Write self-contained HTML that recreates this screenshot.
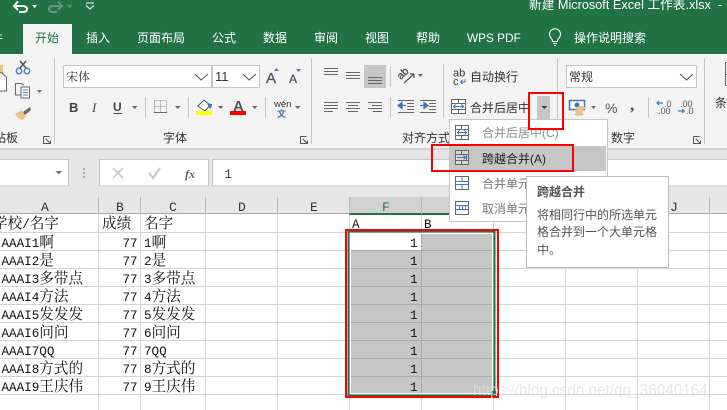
<!DOCTYPE html>
<html><head><meta charset="utf-8"><style>
html,body{margin:0;padding:0;width:727px;height:410px;overflow:hidden;background:#fff}
svg{display:block}
text{white-space:pre}
.s{font-family:"Liberation Sans","Noto Sans CJK SC",sans-serif;font-size:12px;fill:#333}
.w{fill:#fff;font-size:12px}
.d{font-family:"Liberation Mono","Noto Serif CJK SC",serif;font-size:14.6px;fill:#111}
.l{font-family:"Liberation Mono",monospace;font-size:12.6px}
.h{font-family:"Liberation Mono",monospace;font-size:13px;fill:#333}
.g{stroke:#d4d4d4;stroke-width:1;fill:none}
.ic{stroke:#666;stroke-width:1;fill:none}
.dd{fill:#666}
.sep{stroke:#c6c6c6;stroke-width:1}
</style></head><body>
<svg width="727" height="410" viewBox="0 0 727 410" xmlns="http://www.w3.org/2000/svg" shape-rendering="crispEdges">
<!-- title bar -->
<rect width="727" height="54" fill="#217346"/>
<rect x="23" y="24" width="49" height="30" fill="#f3f3f3"/>
<g shape-rendering="auto">
<path d="M15 6 H22 Q27 6 27 9 Q27 12 22 12 H19 M18 1.500 L14 6 L18 10" stroke="#fff" stroke-width="2" fill="none"/>
<path d="M32 5 h5 l-2.500 3z" fill="#fff"/>
<path d="M61 6 H54 Q49 6 49 9 Q49 12 54 12 H57 M58 1.500 L62 6 L58 10" stroke="#5f9a7b" stroke-width="2" fill="none"/>
<path d="M67 5 h5 l-2.500 3z" fill="#5f9a7b"/>
<path d="M86 3 h8 M86 5.500 L90 9 L94 5.500" stroke="#fff" stroke-width="1" fill="none"/>
</g>
<text x="529" y="9" class="s w" style="font-size:12.700px">新建 Microsoft Excel 工作表.xlsx  -</text>
<text x="-9" y="42" class="s w">件</text>
<text x="35" y="42" class="s" style="fill:#217346">开始</text>
<text x="86" y="42" class="s w">插入</text>
<text x="137" y="42" class="s w">页面布局</text>
<text x="212" y="42" class="s w">公式</text>
<text x="263" y="42" class="s w">数据</text>
<text x="314" y="42" class="s w">审阅</text>
<text x="365" y="42" class="s w">视图</text>
<text x="416" y="42" class="s w">帮助</text>
<text x="467" y="42" class="s w" style="font-size:11.800px">WPS PDF</text>
<text x="574" y="42" class="s w">操作说明搜索</text>
<g shape-rendering="auto"><path d="M552.500 41.500 Q552.500 39.500 551 38 A5.500 5.500 0 1 1 559 38 Q557.500 39.500 557.500 41.500 Z M553 43.500 h4 M554 45.500 h2" stroke="#fff" stroke-width="1" fill="none"/></g>
<!-- ribbon -->
<rect y="54" width="727" height="95" fill="#f3f3f3"/>
<rect y="148" width="727" height="2" fill="#d2d2d2"/>
<rect y="150" width="727" height="47" fill="#e6e6e6"/>
<path class="sep" d="M54.500 58V144M311.500 58V144M704.500 58V144M557.500 58V144M443.500 64V118M390.500 66V87M390.500 97V118M145.500 97V118M188.500 97V118M265.500 97V118M648.500 97V118" style="stroke:#c4c4c4"/>
<!-- clipboard -->
<g shape-rendering="auto">
<rect x="0" y="65" width="3" height="8" fill="#ecc27a"/>
<path d="M-1 73 H2 L6.500 77 V91 H-1 Z" fill="#fff" stroke="#666"/>
<circle cx="19" cy="71" r="2.800" fill="none" stroke="#4a7ebb" stroke-width="1.400"/><circle cx="27" cy="71" r="2.800" fill="none" stroke="#4a7ebb" stroke-width="1.400"/>
<path d="M20 68 L26 61 M26 68 L20 61" stroke="#555" stroke-width="1.600"/>
<path d="M15.500 84 V83.500 H21 L24 85 M21 95 H15.500 V83.500" class="ic"/><rect x="21" y="87" width="8.500" height="11" fill="#fff" stroke="#666"/>
<path d="M23 90 h5 M23 92.500 h5 M23 95 h5" stroke="#4a7ebb"/>
<path class="dd" d="M37 90 h5 l-2.500 3z"/>
<path d="M15 114 L22 110 L26 117 L22 120 Q18 119 15 114Z" fill="#edc487"/><path d="M23 112 L30 107 L31 110 L25 115Z" fill="#666"/>
</g>
<text x="-6" y="142" class="s">粘板</text>
<path d="M43.500 136.500h6M43.500 136.500v7h7v-3M46 139l4 4" class="ic" style="stroke:#555"/>
<!-- font group -->
<rect x="63.500" y="65.500" width="148" height="22" fill="#fff" stroke="#c6c6c6"/>
<rect x="212.500" y="65.500" width="47" height="22" fill="#fff" stroke="#c6c6c6"/>
<text x="66" y="81" class="s" style="font-family:'Noto Serif CJK SC',serif">宋体</text>
<text x="215" y="81" class="s" style="font-size:13px">11</text>
<g shape-rendering="auto">
<path d="M195 74 L201 80 L208 74M243 74 L249 80 L256 74" stroke="#555" stroke-width="1.100" fill="none"/>
<text x="266" y="83" class="s" style="font-size:15px;fill:#555;stroke:#555;stroke-width:.3">A</text>
<text x="289" y="83" class="s" style="font-size:12px;fill:#555;stroke:#555;stroke-width:.3">A</text>
<path d="M274 71 h5 l-2.500 -3z" fill="#4a7ebb"/><path d="M296 69 h5 l-2.500 3z" fill="#4a7ebb"/>
<text x="69" y="112" class="s" style="font-weight:bold;font-size:13px;fill:#444;font-family:'Liberation Sans'">B</text>
<text x="92" y="112" class="s" style="font-style:italic;font-size:13px;fill:#444;font-family:'Liberation Serif'">I</text>
<text x="113" y="111" class="s" style="font-weight:bold;font-size:12px;fill:#444">U</text>
<path d="M113.500 113.500h8.500" stroke="#444"/>
<path class="dd" d="M132 106 h5.500 l-2.750 3zM175 106 h5.500 l-2.750 3zM218 106 h5.500 l-2.750 3zM252 106 h5.500 l-2.750 3zM295 106 h5.500 l-2.750 3z"/>
</g>
<path d="M154.500 100.500h12M154.500 106.500h12M154.500 100.500v12M160.500 100.500v12M166.500 100.500v12" stroke="#888" stroke-dasharray="1 1" fill="none"/><path d="M154 112.500h13" stroke="#666"/>
<g shape-rendering="auto">
<path d="M198 106 L204 100 L210 105 L205 111 Z" fill="#fff" stroke="#555"/><path d="M207 103 L212 104 Q212 107 210 109 Q208 106 207 103Z" fill="#3f77b7"/>
<text x="233" y="111" class="s" style="font-size:15px;fill:#555;font-weight:bold">A</text>
<text x="274" y="107" class="s" style="font-size:9.500px;fill:#333">wén</text>
<text x="277" y="117" class="s" style="font-size:9px;fill:#3f77b7;font-weight:bold">文</text>
</g>
<rect x="196" y="111" width="16" height="4" fill="#ff0"/>
<rect x="230" y="111" width="16" height="4" fill="#f00"/>
<text x="163" y="142" class="s">字体</text>
<path d="M300.500 136.500h6M300.500 136.500v7h7v-3M303 139l4 4" class="ic" style="stroke:#555"/>
<!-- alignment -->
<rect x="364" y="65" width="22" height="23" fill="#c6c6c6"/>
<path class="ic" d="M324 68.500h14M324 71.500h14M324 74.500h14M346 72.500h14M346 75.500h14M346 78.500h14M368 77.500h14M368 80.500h14M368 83.500h14M324 102.500h14M324 105.500h14M324 108.500h14M324 111.500h9M346 102.500h14M348 105.500h10M346 108.500h14M348 111.500h10M368 102.500h14M372 105.500h10M368 108.500h14M373 111.500h9"/>
<g shape-rendering="auto">
<text transform="translate(401 80) rotate(-45)" class="s" style="font-family:'Liberation Sans';font-size:10.500px;fill:#444;stroke:#444;stroke-width:.3">ab</text>
<path d="M404 83 L414 74 M414 74 h-4 M414 74 v4" stroke="#555" stroke-width="1.200" fill="none"/>
<path class="dd" d="M418 74 h5 l-2.500 3z"/>
<path d="M398 105.500 l4-3v6z M402 105.500h4" fill="#3f77b7" stroke="#3f77b7" stroke-width="1.200"/>
<path d="M428 105.500 l-4-3v6z M424 105.500h-4" fill="#3f77b7" stroke="#3f77b7" stroke-width="1.200"/>
</g>
<path class="ic" d="M398 100.500h16M407 103.500h7M407 106.500h7M407 109.500h7M398 112.500h16M420 100.500h16M429 103.500h7M429 106.500h7M429 109.500h7M420 112.500h16"/>
<!-- wrap and merge -->
<text x="453" y="76.500" class="s" style="font-family:'Liberation Sans';font-size:11px">ab</text>
<text x="453" y="85" class="s" style="font-family:'Liberation Sans';font-size:11px">c</text>
<path d="M465 79v3h-4m1.500-2l-2 2 2 2" stroke="#3f77b7" fill="none"/>
<text x="470" y="81" class="s">自动换行</text>
<rect x="451.500" y="99.500" width="14" height="14" fill="#fff" stroke="#666"/>
<path class="ic" d="M451.500 103.500h14M451.500 109.500h14M458.500 99.500v4M458.500 109.500v4"/>
<path d="M454 106.500h9M455.500 104.500l-2 2 2 2M461.500 104.500l2 2-2 2" stroke="#3f77b7" fill="none"/>
<text x="470" y="112" class="s">合并后居中</text>
<rect x="537" y="96" width="13" height="23" fill="#c6c6c6"/>
<path d="M541 106h6l-3 3z" fill="#444"/>
<text x="402" y="142" class="s">对齐方式</text>
<!-- number -->
<rect x="566.500" y="65.500" width="130" height="22" fill="#fff" stroke="#c6c6c6"/>
<text x="569" y="81" class="s">常规</text>
<path d="M680 74 L686.500 80 L693 74" stroke="#555" stroke-width="1.100" fill="none" shape-rendering="auto"/>
<g shape-rendering="auto">
<rect x="569.500" y="100.500" width="15" height="9" fill="#fff" stroke="#3f77b7" stroke-width="1.500"/>
<circle cx="577" cy="105" r="2.500" fill="#3f77b7"/>
<ellipse cx="581" cy="108" rx="4.500" ry="2" fill="#edc487"/><ellipse cx="579" cy="111" rx="4.500" ry="2" fill="#edc487"/><ellipse cx="579" cy="114" rx="4.500" ry="2" fill="#edc487"/>
<path class="dd" d="M591 106 h5 l-2.500 3z"/>
<text x="605" y="113" class="s" style="font-size:14px;fill:#555;font-family:'Liberation Sans'">%</text>
<text x="630" y="110" class="s" style="font-size:17px;fill:#444;font-weight:bold;font-family:'Liberation Serif'">,</text>
<text x="664" y="107" class="s" style="font-size:9px;fill:#555;font-family:'Liberation Sans'">.0</text>
<text x="658" y="114" class="s" style="font-size:9px;fill:#555;font-family:'Liberation Sans'">.00</text>
<text x="680" y="107" class="s" style="font-size:9px;fill:#555;font-family:'Liberation Sans'">.00</text>
<text x="686" y="114" class="s" style="font-size:9px;fill:#555;font-family:'Liberation Sans'">.0</text>
<path d="M663 103h-6m2-2l-2 2 2 2M678 111h6m-2-2l2 2-2 2" stroke="#3f77b7" stroke-width="1.200" fill="none"/>
</g>
<text x="611" y="142" class="s">数字</text>
<path d="M693.500 136.500h6M693.500 136.500v7h7v-3M696 139l4 4" class="ic" style="stroke:#555"/>
<text x="715" y="107" class="s">条</text>
<path class="ic" d="M725.500 62.500h3M725.500 62.500v23M725.500 85.500h3M725.500 74.500h3"/>
<!-- formula bar -->
<rect x="-2" y="159.500" width="70.500" height="26.500" fill="#fff" stroke="#c6c6c6"/>
<rect x="99.500" y="159.500" width="109" height="26.500" fill="#fff" stroke="#c6c6c6"/>
<rect x="212.500" y="159.500" width="520" height="26.500" fill="#fff" stroke="#c6c6c6"/>
<path d="M55 171h7l-3.500 3.500z" fill="#777"/>
<path d="M83 168h2v2h-2zM83 172h2v2h-2zM83 176h2v2h-2z" fill="#aaa"/>
<g shape-rendering="auto">
<path d="M113 168 L123 178 M123 168 L113 178" stroke="#c8c8c8" stroke-width="1.800"/>
<path d="M149 173 L153 178 L160 168" stroke="#c8c8c8" stroke-width="2" fill="none"/>
<text x="185" y="178" class="s" style="font:italic bold 12px 'Liberation Serif';fill:#666">fx</text>
</g>
<text x="224.500" y="178" class="s" style="font-size:12.500px;font-family:'Liberation Mono'">1</text>
<!-- grid -->
<path class="g" d="M0 232.500H727M0 250.500H727M0 268.500H727M0 286.500H727M0 304.500H727M0 322.500H727M0 340.500H727M0 358.500H727M0 376.500H727M0 394.500H727M98.500 214V410M140.500 214V410M205.500 214V410M277.500 214V410M349.500 214V410M421.500 214V410M493.500 214V410M565.500 214V410M637.500 214V410M709.500 214V410"/>
<!-- col headers -->
<rect y="197" width="727" height="17" fill="#e6e6e6"/>
<rect x="349" y="197" width="144" height="17" fill="#d2d2d2"/>
<rect y="213" width="727" height="1" fill="#a8a8a8"/>
<rect x="349" y="213" width="144" height="2" fill="#217346"/>
<path d="M98.500 197V214M140.500 197V214M205.500 197V214M277.500 197V214M349.500 197V214M421.500 197V214M493.500 197V214M565.500 197V214M637.500 197V214M709.500 197V214" stroke="#b8b8b8"/>
<text x="41" y="211" class="h">A</text><text x="116" y="211" class="h">B</text><text x="169" y="211" class="h">C</text><text x="238" y="211" class="h">D</text><text x="310" y="211" class="h">E</text><text x="382" y="211" class="h" style="fill:#217346">F</text><text x="670" y="211" class="h">J</text>
<!-- cells -->
<g class="d">
<text x="-7" y="228">学校<tspan class="l">/</tspan>名字</text><text x="102" y="228">成绩</text><text x="144" y="228">名字</text>
<text x="1.500" y="247"><tspan class="l">AAAI1</tspan>啊</text>
<text x="1.500" y="265"><tspan class="l">AAAI2</tspan>是</text>
<text x="1.500" y="283"><tspan class="l">AAAI3</tspan>多带点</text>
<text x="1.500" y="301"><tspan class="l">AAAI4</tspan>方法</text>
<text x="1.500" y="319"><tspan class="l">AAAI5</tspan>发发发</text>
<text x="1.500" y="337"><tspan class="l">AAAI6</tspan>问问</text>
<text x="1.500" y="355"><tspan class="l">AAAI7QQ</tspan></text>
<text x="1.500" y="373"><tspan class="l">AAAI8</tspan>方式的</text>
<text x="1.500" y="391"><tspan class="l">AAAI9</tspan>王庆伟</text>
<text x="144" y="247"><tspan class="l">1</tspan>啊</text>
<text x="144" y="265"><tspan class="l">2</tspan>是</text>
<text x="144" y="283"><tspan class="l">3</tspan>多带点</text>
<text x="144" y="301"><tspan class="l">4</tspan>方法</text>
<text x="144" y="319"><tspan class="l">5</tspan>发发发</text>
<text x="144" y="337"><tspan class="l">6</tspan>问问</text>
<text x="144" y="355"><tspan class="l">7QQ</tspan></text>
<text x="144" y="373"><tspan class="l">8</tspan>方式的</text>
<text x="144" y="391"><tspan class="l">9</tspan>王庆伟</text>
<text x="122.500" y="247" class="l">77</text><text x="122.500" y="265" class="l">77</text><text x="122.500" y="283" class="l">77</text><text x="122.500" y="301" class="l">77</text><text x="122.500" y="319" class="l">77</text><text x="122.500" y="337" class="l">77</text><text x="122.500" y="355" class="l">77</text><text x="122.500" y="373" class="l">77</text><text x="122.500" y="391" class="l">77</text>
<text x="352" y="228" class="l">A</text><text x="424" y="228" class="l">B</text>
</g>
<!-- selection -->
<rect x="351" y="234" width="141" height="159" fill="#c6c6c6"/>
<rect x="351" y="234" width="70" height="16" fill="#fff"/>
<path d="M351 250.500H492M351 268.500H492M351 286.500H492M351 304.500H492M351 322.500H492M351 340.500H492M351 358.500H492M351 376.500H492M421.500 234V393" stroke="#a9a9a9"/>
<rect x="350.500" y="233.500" width="142" height="160" fill="none" stroke="#fff"/>
<rect x="348.500" y="231.500" width="146" height="164" fill="none" stroke="#217346" stroke-width="2"/>
<rect x="491" y="391" width="5" height="5" fill="#217346"/>
<rect x="346" y="230" width="152" height="167" fill="none" stroke="#f00" stroke-width="2"/>
<g style="fill:#111">
<text x="410" y="247" class="d l">1</text><text x="410" y="265" class="d l">1</text><text x="410" y="283" class="d l">1</text><text x="410" y="301" class="d l">1</text><text x="410" y="319" class="d l">1</text><text x="410" y="337" class="d l">1</text><text x="410" y="355" class="d l">1</text><text x="410" y="373" class="d l">1</text><text x="410" y="391" class="d l">1</text>
</g>
<!-- menu -->
<rect x="449.500" y="119.500" width="158" height="102" fill="#fff" stroke="#c6c6c6"/>
<rect x="450" y="146" width="156" height="25" fill="#c6c6c6"/>
<!-- item 1: merge and center -->
<rect x="455.500" y="125.500" width="13" height="14" fill="#fff" stroke="#666"/>
<path class="ic" d="M455.500 129.500h13M455.500 135.500h13M461.500 125.500v4M461.500 135.500v4"/>
<path d="M458 132.500h8M459.500 130.500l-2 2 2 2M464.500 130.500l2 2-2 2" stroke="#3f77b7" fill="none"/>
<!-- item 2: merge across -->
<rect x="455.500" y="150.500" width="13" height="14" fill="#d8d8d8" stroke="#666"/>
<path class="ic" d="M455.500 154.500h13M455.500 160.500h13M461.500 150.500v4M461.500 160.500v4"/>
<path d="M457 157.500h8M463.500 155.500l2 2-2 2M466.500 155v5" stroke="#3f77b7" fill="none"/>
<!-- item 3: merge cells -->
<rect x="455.500" y="176.500" width="13" height="13" fill="#fff" stroke="#666"/>
<path d="M455.500 181.500h13M455.500 184.500h13M462 177v4M462 185v4" stroke="#3f77b7" fill="none"/>
<!-- item 4: unmerge -->
<rect x="455.500" y="201.500" width="13" height="13" fill="#fff" stroke="#666"/>
<path d="M456 205.500h12M456 209.500h12M459.500 206v3M462.500 206v3M465.500 206v3" stroke="#3f77b7" fill="none"/>
<text x="482" y="137" class="s" style="fill:#8b8b8b">合并后居中<tspan font-family="Liberation Sans">(C)</tspan></text>
<text x="482" y="163" class="s" style="fill:#222">跨越合并<tspan font-family="Liberation Sans">(A)</tspan></text>
<text x="482" y="188" class="s" style="fill:#777">合并单元格</text>
<text x="482" y="213" class="s" style="fill:#777">取消单元格合并</text>
<!-- red rects -->
<rect x="529" y="93" width="34" height="36" fill="none" stroke="#f00" stroke-width="2"/>
<rect x="432" y="145" width="141" height="26" fill="none" stroke="#f00" stroke-width="2"/>
<!-- tooltip -->
<rect x="526.500" y="176.500" width="142" height="91" fill="#fff" stroke="#bdbdbd"/>
<text x="537" y="196" class="s" style="font-weight:bold;fill:#555">跨越合并</text>
<text x="537" y="219" class="s" style="fill:#555">将相同行中的所选单元</text>
<text x="537" y="236" class="s" style="fill:#555">格合并到一个大单元格</text>
<text x="537" y="254" class="s" style="fill:#555">中。</text>
<!-- watermark -->
<text x="473" y="395" style="font:15.300px 'Liberation Sans',sans-serif;fill:#e0e0e0;opacity:.75">https://blog.csdn.net/qq_36040164</text>
</svg>
</body></html>
